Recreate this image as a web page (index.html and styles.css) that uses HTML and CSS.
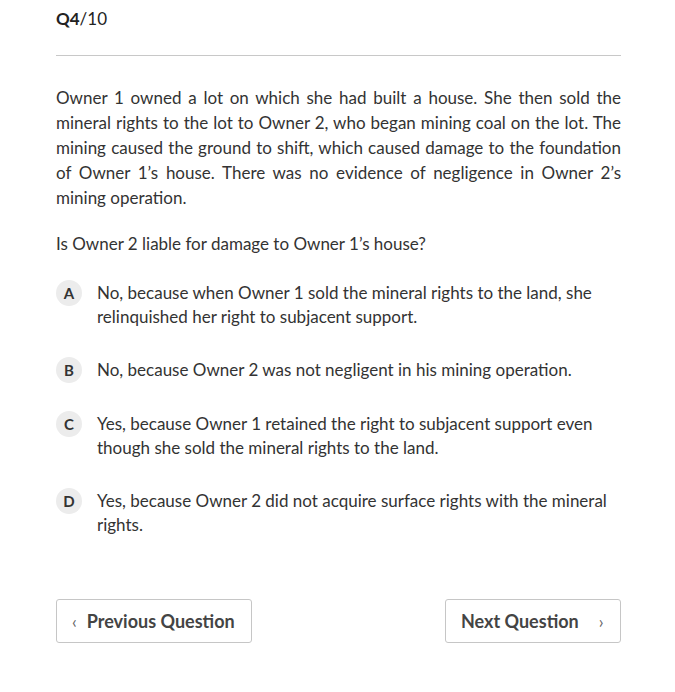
FILE: index.html
```html
<!DOCTYPE html>
<html>
<head>
<meta charset="utf-8">
<link rel="stylesheet" href="styles.css">
</head>
<body>
<main class="quiz">
  <header class="counter"><strong>Q4</strong>/10</header>
  <hr class="divider">
  <p class="stem">Owner 1 owned a lot on which she had built a house. She then sold the mineral rights to the lot to Owner 2, who began mining coal on the lot. The mining caused the ground to shift, which caused damage to the foundation of Owner 1’s house. There was no evidence of negligence in Owner 2’s mining operation.</p>
  <p class="question">Is Owner 2 liable for damage to Owner 1’s house?</p>
  <ul class="options">
    <li class="option"><span class="letter">A</span><span class="text">No, because when Owner 1 sold the mineral rights to the land, she relinquished her right to subjacent support.</span></li>
    <li class="option"><span class="letter">B</span><span class="text">No, because Owner 2 was not negligent in his mining operation.</span></li>
    <li class="option"><span class="letter">C</span><span class="text">Yes, because Owner 1 retained the right to subjacent support even though she sold the mineral rights to the land.</span></li>
    <li class="option"><span class="letter">D</span><span class="text">Yes, because Owner 2 did not acquire surface rights with the mineral rights.</span></li>
  </ul>
  <nav class="nav">
    <button class="btn prev"><span class="chev">‹</span>Previous Question</button>
    <button class="btn next">Next Question<span class="chev">›</span></button>
  </nav>
</main>
</body>
</html>
```
FILE: styles.css
```css
* { box-sizing: border-box; }
html, body { margin: 0; padding: 0; background: #fff; }
body {
  font-family: Lato, "Open Sans", sans-serif;
  color: #333;
}
.quiz {
  width: 565px;
  margin-left: 56px;
  padding-top: 8px;
}
.counter {
  font-size: 17px;
  line-height: 22px;
  color: #222;
}
.counter strong { font-weight: 700; }
.divider {
  border: 0;
  border-top: 1px solid #c8c8c8;
  margin: 25px 0 0 0;
  height: 0;
}
.stem {
  margin: 29px 0 0 0;
  font-size: 17px;
  line-height: 25px;
  text-align: justify;
}
.question {
  margin: 21px 0 0 0;
  font-size: 17px;
  line-height: 25px;
}
.options {
  list-style: none;
  margin: 25px 0 0 0;
  padding: 0;
  display: flex;
  flex-direction: column;
  gap: 29px;
}
.option {
  display: flex;
  align-items: flex-start;
  gap: 15px;
  font-size: 17px;
  line-height: 24px;
}
.letter {
  flex: none;
  width: 26px;
  height: 26px;
  border-radius: 50%;
  background: #ececec;
  display: flex;
  align-items: center;
  justify-content: center;
  font-size: 15px;
  font-weight: 700;
  color: #333;
  margin-top: -1px;
}
.text { flex: 1; }
.nav {
  display: flex;
  justify-content: space-between;
  margin-top: 62px;
}
.btn {
  font-family: Lato, "Open Sans", sans-serif;
  font-size: 18px;
  font-weight: 700;
  color: #444;
  background: #fff;
  border: 1px solid #c6c6c6;
  border-radius: 3px;
  height: 44px;
  display: flex;
  align-items: center;
  padding: 0 15px;
}
.prev { width: 196px; }
.next { width: 176px; }
.chev {
  font-weight: 400;
  font-size: 17px;
  color: #666;
}
.prev .chev { margin-right: 10px; }
.next .chev { margin-left: 20px; }
```
